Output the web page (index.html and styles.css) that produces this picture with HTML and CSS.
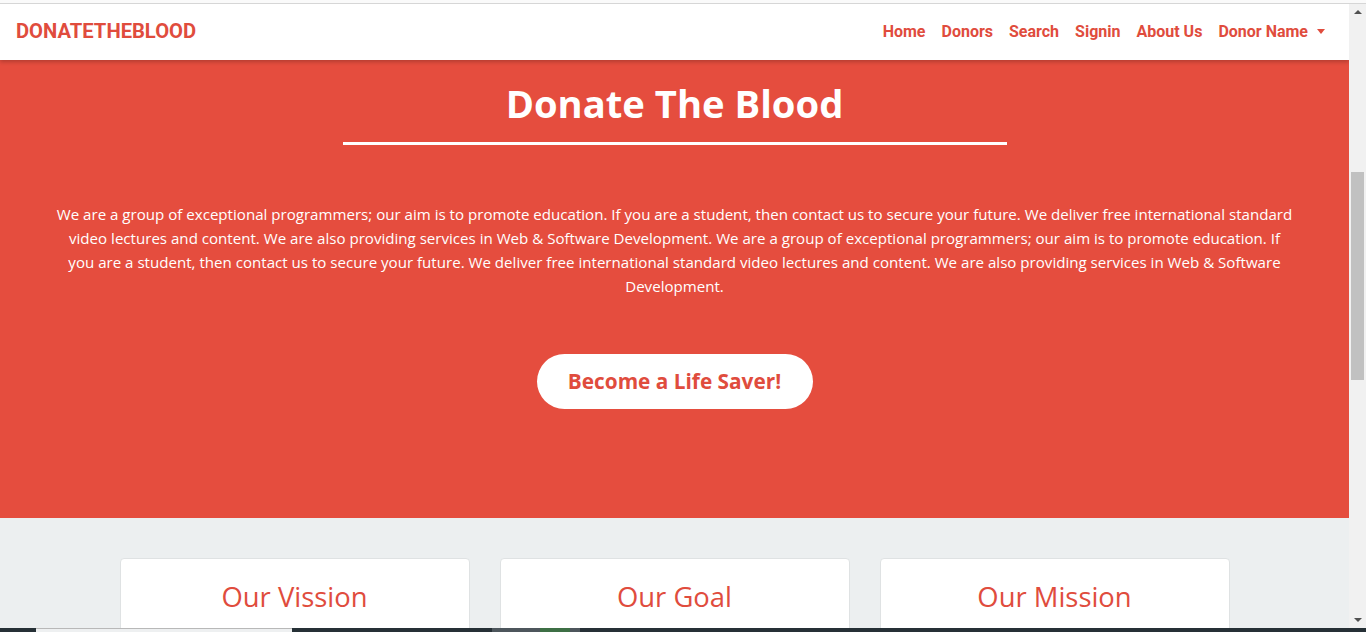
FILE: index.html
```html
<!DOCTYPE html>
<html lang="en">
<head>
  <meta charset="UTF-8" />
  <meta name="viewport" content="width=device-width, initial-scale=1.0"/>
  <title>Donate The Blood</title>
  <link rel="stylesheet" href="styles.css">
</head>
<body>

  <div class="window-top"></div>

  <div class="viewport">
    <div class="page">

      <nav class="navbar">
        <a class="brand" href="#">DONATETHEBLOOD</a>
        <ul class="nav-links">
          <li><a href="#">Home</a></li>
          <li><a href="#">Donors</a></li>
          <li><a href="#">Search</a></li>
          <li><a href="#">Signin</a></li>
          <li><a href="#">About Us</a></li>
          <li><a href="#" class="dropdown-toggle">Donor Name</a></li>
        </ul>
      </nav>

      <header class="hero">
        <h1>Donate The Blood</h1>
        <hr class="hero-line">
        <p class="hero-text">
          We are a group of exceptional programmers; our aim is to promote education. If you are a student, then contact us to secure your future. We deliver free international standard<br>
          video lectures and content. We are also providing services in Web &amp; Software Development. We are a group of exceptional programmers; our aim is to promote education. If<br>
          you are a student, then contact us to secure your future. We deliver free international standard video lectures and content. We are also providing services in Web &amp; Software<br>
          Development.
        </p>
        <a href="#" class="btn-saver">Become a Life Saver!</a>
      </header>

      <section class="features">
        <div class="container">
          <div class="card"><h2>Our Vission</h2></div>
          <div class="card"><h2>Our Goal</h2></div>
          <div class="card"><h2>Our Mission</h2></div>
        </div>
      </section>

    </div>

    <div class="scrollbar">
      <span class="arrow up"></span>
      <div class="track"><div class="thumb"></div></div>
      <span class="arrow down"></span>
    </div>
  </div>

  <div class="taskbar">
    <span class="tb-dark" style="width: 36px"></span>
    <span class="tb-light" style="width: 256px"></span>
    <span class="tb-dark" style="width: 200px"></span>
    <span class="tb-gray" style="width: 48px"></span>
    <span class="tb-green" style="width: 30px"></span>
    <span class="tb-gray" style="width: 10px"></span>
    <span class="tb-dark tb-fill"></span>
  </div>

</body>
</html>
```

FILE: styles.css
```css
* {
  box-sizing: border-box;
}

html,
body {
  margin: 0;
  height: 632px;
  overflow: hidden;
}

body {
  display: flex;
  flex-direction: column;
  font-family: "Open Sans", "Noto Sans", sans-serif;
  background-color: #ffffff;
}

a {
  text-decoration: none;
}

.window-top {
  height: 4px;
  background-color: #fafafa;
  border-bottom: 1px solid #d6d6d6;
}

.viewport {
  flex: 1;
  display: flex;
  min-height: 0;
}

.page {
  flex: 1;
  overflow: hidden;
  background-color: #eceff0;
}

/* navbar */
.navbar {
  position: relative;
  z-index: 2;
  height: 56px;
  display: flex;
  align-items: center;
  justify-content: space-between;
  padding: 0 16px 2px;
  background-color: #fff;
  box-shadow: 0 2px 4px rgba(0, 0, 0, 0.22);
  font-family: Roboto, "Liberation Sans", sans-serif;
  font-weight: 700;
}

.brand {
  color: #e04c3d;
  font-size: 20.2px;
}

.nav-links {
  list-style: none;
  display: flex;
  margin: 0;
  padding: 0;
}

.nav-links a {
  display: block;
  padding: 0 8px;
  color: #e04c3d;
  font-size: 16px;
}

.dropdown-toggle::after {
  content: "";
  display: inline-block;
  margin-left: 9px;
  vertical-align: 3px;
  border-top: 5px solid #e04c3d;
  border-left: 4.5px solid transparent;
  border-right: 4.5px solid transparent;
}

/* hero */
.hero {
  height: 458px;
  padding-top: 20px;
  background-color: #e54d3e;
  color: #fff;
  text-align: center;
}

.hero h1 {
  margin: 0;
  font-size: 38.2px;
  line-height: 46px;
  font-weight: 700;
}

.hero-line {
  width: 664px;
  height: 3px;
  margin: 16px auto 0;
  border: 0;
  background-color: #fff;
}

.hero-text {
  margin: 57px 30px 0;
  font-size: 15.1px;
  line-height: 24px;
}

.btn-saver {
  display: inline-block;
  margin-top: 56px;
  width: 276px;
  height: 55px;
  line-height: 55px;
  border-radius: 28px;
  background-color: #fff;
  color: #e04c3d;
  font-size: 20.8px;
  font-weight: 700;
}

/* features */
.features {
  padding-top: 40px;
}

.container {
  width: 1110px;
  margin: 0 auto;
  display: grid;
  grid-template-columns: repeat(3, 1fr);
  gap: 30px;
}

.card {
  height: 200px;
  padding-top: 21px;
  background-color: #fff;
  border: 1px solid #dfe2e3;
  border-radius: 4px;
  text-align: center;
}

.card h2 {
  margin: 0;
  color: #e04c3d;
  font-size: 27.4px;
  line-height: 34px;
  font-weight: 400;
}

/* scrollbar */
.scrollbar {
  width: 17px;
  display: flex;
  flex-direction: column;
  align-items: center;
  background-color: #f1f1f1;
}

.arrow {
  width: 0;
  height: 0;
  margin: 6px 0;
  border-left: 4px solid transparent;
  border-right: 4px solid transparent;
}

.arrow.up {
  border-bottom: 4px solid #505050;
}

.arrow.down {
  border-top: 4px solid #505050;
}

.track {
  flex: 1;
  width: 100%;
  padding: 152px 2px 0;
}

.thumb {
  height: 208px;
  background-color: #c1c1c1;
}

/* os taskbar strip */
.taskbar {
  height: 4px;
  display: flex;
}

.tb-dark {
  background-color: #263036;
}

.tb-light {
  background-color: #eef0f1;
  border-top: 1px solid #b8b8b8;
}

.tb-gray {
  background-color: #4d565c;
}

.tb-green {
  background-color: #3e6f45;
}

.tb-fill {
  flex: 1;
}
```
